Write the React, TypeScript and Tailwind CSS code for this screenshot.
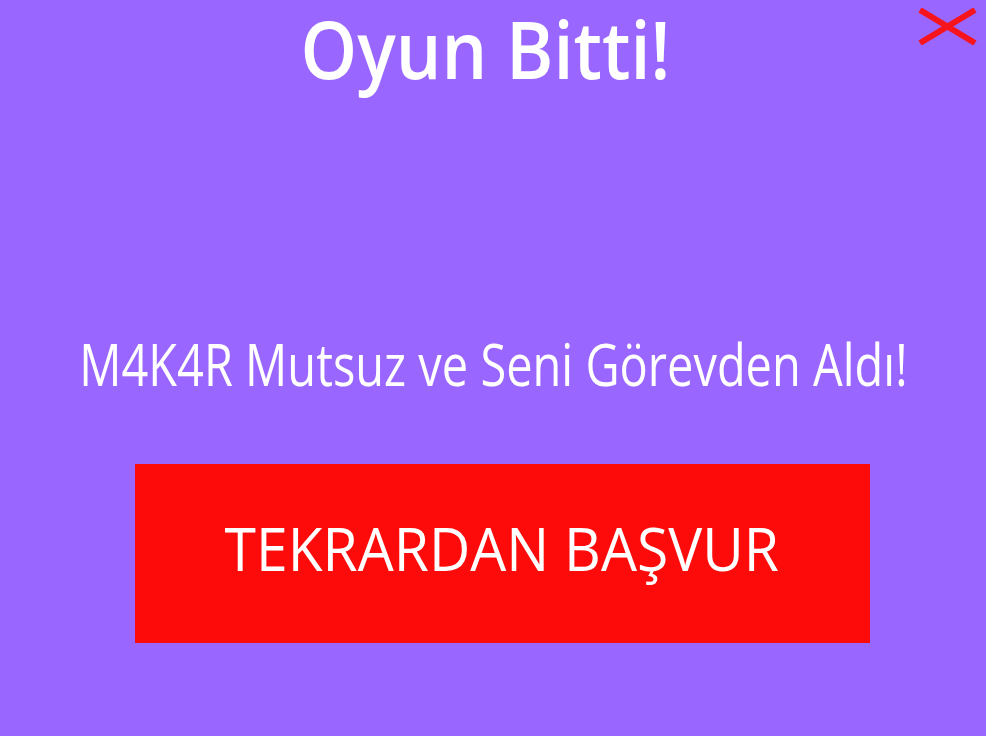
import { useState } from 'react'

// Game-over screen: title, verdict line and a restart button
export default function App() {
  const [open, setOpen] = useState(true)

  if (!open) return null

  return (
    <div className="relative flex h-[736px] w-[986px] flex-col items-center bg-[#9966ff] font-['Open_Sans',sans-serif] text-white">
      <button
        onClick={() => setOpen(false)}
        className="absolute right-[9px] top-[8px] h-[37px] w-[59px]"
        aria-label="Kapat"
      >
        <svg width="59" height="37" viewBox="0 0 59 37">
          <path d="M2 2 L57 35 M57 2 L2 35" stroke="#f8141c" strokeWidth="6" strokeLinecap="butt" />
        </svg>
      </button>

      <h1 className="-translate-x-[8px] scale-x-[0.9] whitespace-nowrap text-[80px] font-semibold leading-[1.2]">
        Oyun Bitti!
      </h1>

      <p className="mt-[239px] origin-center scale-x-[0.81] whitespace-nowrap text-[58px] leading-none">
        M4K4R Mutsuz ve Seni Görevden Aldı!
      </p>

      <button className="ml-[18px] mt-[71px] flex h-[179px] w-[735px] items-center justify-center bg-[#fd0b0b] pb-3 text-white">
        <span className="scale-x-[0.95] whitespace-nowrap text-[60px] leading-none">TEKRARDAN BAŞVUR</span>
      </button>
    </div>
  )
}
